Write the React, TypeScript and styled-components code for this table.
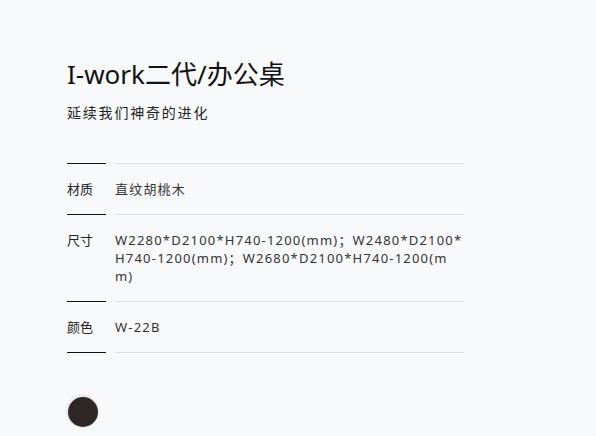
import * as React from "react";
import styled, { createGlobalStyle } from "styled-components";

const Global = createGlobalStyle`
    html, body {
        margin: 0;
        padding: 0;
        background: #f8f9fb;
    }
    body {
        font-family: "Noto Sans", "Noto Sans CJK SC", sans-serif;
        color: #1a1a1a;
    }
`;

const Page = styled.div`
    width: 596px;
    height: 436px;
    padding: 56px 0 0 67px;
    box-sizing: border-box;
    overflow: hidden;
`;

const Title = styled.h1`
    margin: 0;
    font-size: 26px;
    font-weight: 400;
    line-height: 36px;
    color: #111;
`;

const Subtitle = styled.p`
    margin: 12px 0 0;
    font-size: 14px;
    line-height: 18px;
    letter-spacing: 1.8px;
    color: #222;
`;

const Specs = styled.div`
    margin-top: 41px;
    width: 397px;
`;

const Row = styled.div`
    display: grid;
    grid-template-columns: 39px 1fr;
    column-gap: 9px;
`;

const Label = styled.div`
    border-top: 1px solid #111;
    padding: 16px 0;
    font-size: 13px;
    line-height: 18px;
    color: #222;
`;

const Value = styled.div`
    border-top: 1px solid #dcdde0;
    padding: 16px 0;
    font-size: 13px;
    line-height: 18px;
    letter-spacing: 1.2px;
    color: #333;
    word-break: break-all;
`;

const EndLine = styled(Row)`
    height: 1px;
`;

const EndLabel = styled.div`
    background: #111;
`;

const EndValue = styled.div`
    background: #dcdde0;
`;

const Swatches = styled.div`
    display: flex;
    gap: 12px;
    margin-top: 44px;
    padding-left: 1px;
`;

const Swatch = styled.span<{ color: string }>`
    width: 30px;
    height: 30px;
    border-radius: 50%;
    background: ${(p) => p.color};
    box-shadow: -1px -1px 0 2px #ececed;
`;

const specs = [
    { label: "材质", value: "直纹胡桃木" },
    {
        label: "尺寸",
        value: "W2280*D2100*H740-1200(mm)；W2480*D2100*H740-1200(mm)；W2680*D2100*H740-1200(mm)",
    },
    { label: "颜色", value: "W-22B" },
];

const App: React.FC = () => {
    return (
        <Page>
            <Global />
            <Title>I-work二代/办公桌</Title>
            <Subtitle>延续我们神奇的进化</Subtitle>
            <Specs>
                {specs.map((s) => (
                    <Row key={s.label}>
                        <Label>{s.label}</Label>
                        <Value>{s.value}</Value>
                    </Row>
                ))}
                <EndLine>
                    <EndLabel />
                    <EndValue />
                </EndLine>
            </Specs>
            <Swatches>
                <Swatch color="#2f2725" />
            </Swatches>
        </Page>
    );
};

export default App;
